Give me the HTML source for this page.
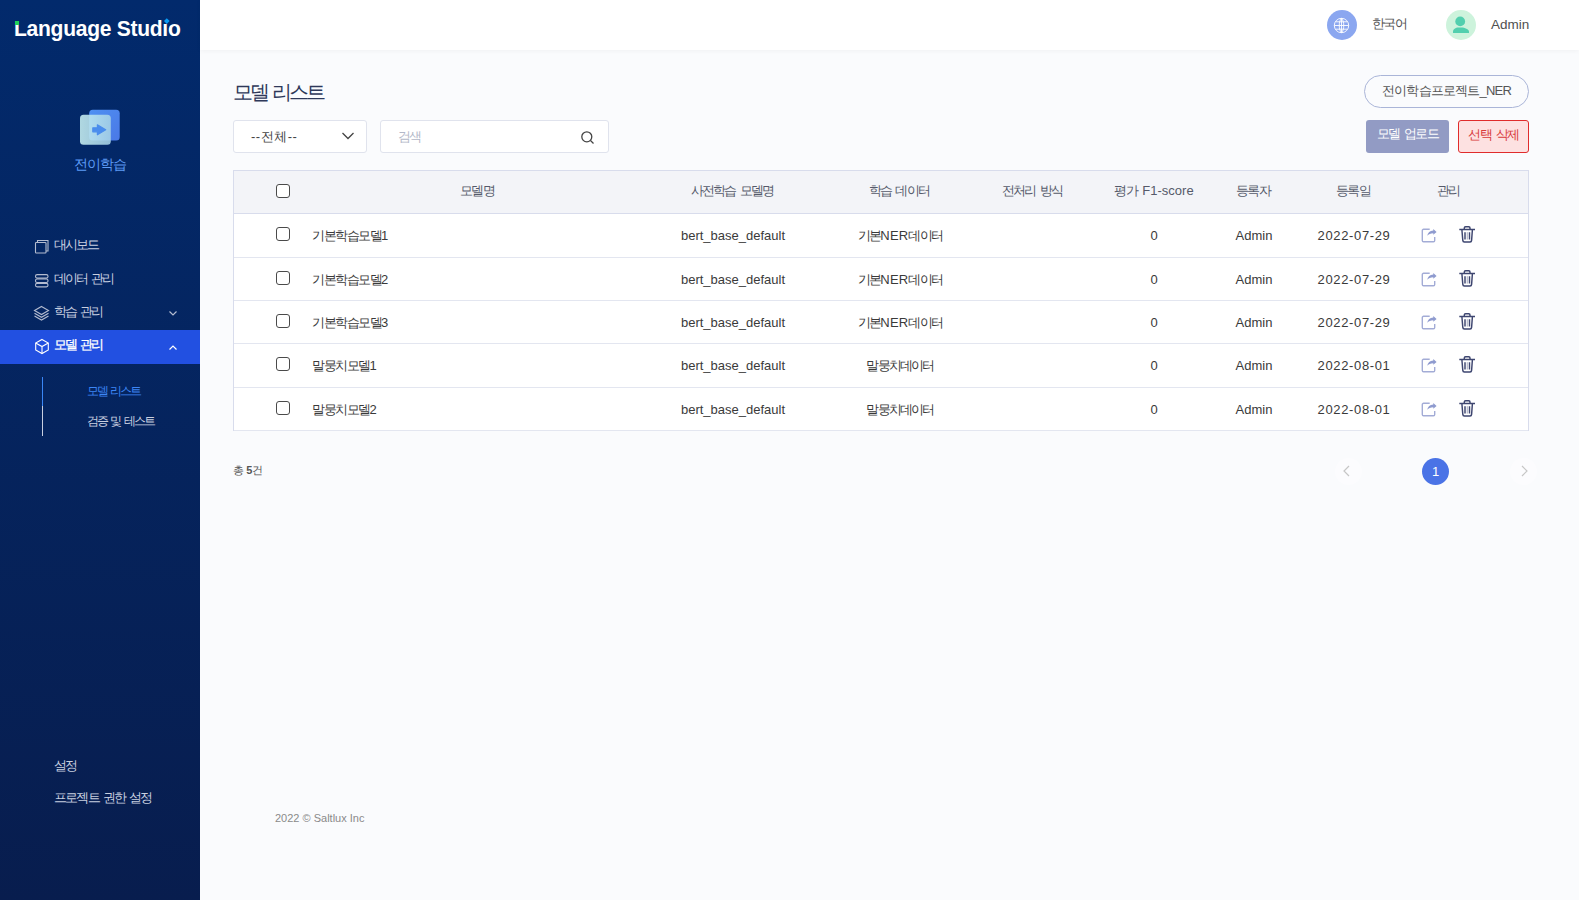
<!DOCTYPE html>
<html><head><meta charset="utf-8">
<style>
*{box-sizing:border-box;margin:0;padding:0}
html,body{width:1579px;height:900px;overflow:hidden;font-family:"Liberation Sans",sans-serif;background:#fafbfd;color:#333}
.abs{position:absolute;white-space:nowrap}
#side{position:absolute;left:0;top:0;width:200px;height:900px;background:linear-gradient(#022a6c,#081d4e)}
#logo{position:absolute;left:14px;top:17px;color:#fff;font-size:21.5px;font-weight:bold;letter-spacing:-0.3px;transform-origin:0 0;transform:scaleX(0.98)}
#hdr{position:absolute;left:200px;top:0;width:1379px;height:50px;background:#fff;box-shadow:0 1px 5px rgba(0,0,0,.045)}
.menu{position:absolute;left:0;width:200px;height:33px;color:#c9d0e0;font-size:13px}
.menu span{position:absolute;left:54px;top:9px}
.menu svg{position:absolute;left:33px;top:9px}
.chev{position:absolute;left:168px;top:12px}
.t13{font-size:13px;color:#444}
#tbl{position:absolute;left:233px;top:170px;width:1296px;height:261px;border:1px solid #d8dcec;background:#fff}
#thead{position:absolute;left:0;top:0;width:1294px;height:43px;background:#f3f4f8;border-bottom:1px solid #d8dcec}
.row{position:absolute;left:0;width:1294px;height:43.4px;border-bottom:1px solid #e3e6f0}
.cb{position:absolute;left:42px;width:14px;height:14px;border:1.6px solid #4a4a4a;border-radius:3px;background:#fff}
.c{position:absolute;top:0;height:43px;line-height:43px;text-align:center;font-size:13px;color:#3a3a3a;white-space:nowrap;transform:translateX(-50%)}
.th{color:#555a6a;line-height:40px}
.kh{letter-spacing:-1.8px;word-spacing:2px;margin-left:-1px}
.kk{letter-spacing:-1.8px}
.ic{position:absolute;top:14px}
.k{letter-spacing:-2px;word-spacing:2px}
.mt{font-size:13px;color:#c9d0e0}
</style></head><body>
<div id="side">
  <div id="logo">Language Stud&#305;o</div>
  <div class="abs" style="left:15px;top:21px;width:4px;height:4px;background:#1ed05a"></div>
  <div class="abs" style="left:164.5px;top:18.9px;width:3.6px;height:3.6px;background:#0a9cf5;transform:rotate(45deg)"></div>
  <!-- app icon -->
  <svg class="abs" style="left:78px;top:107px" width="44" height="40" viewBox="0 0 44 40">
    <defs><linearGradient id="bg1" x1="0" y1="0" x2="1" y2="1"><stop offset="0" stop-color="#4f90f2"/><stop offset="1" stop-color="#4a78e6"/></linearGradient>
    <linearGradient id="fg1" x1="0" y1="0" x2="1" y2="0"><stop offset="0" stop-color="#c8f0f2"/><stop offset="1" stop-color="#a6d2e6"/></linearGradient></defs>
    <rect x="11.2" y="2.7" width="30.5" height="30.8" rx="3.5" fill="url(#bg1)"/>
    <rect x="2" y="7.7" width="30.8" height="30" rx="3.5" fill="url(#fg1)" fill-opacity="0.88"/>
    <path d="M14.8 20.8h4.6v-3l8.3 5-8.3 5v-3h-4.6z" fill="#4b8ded" stroke="#4b8ded" stroke-width="1.2" stroke-linejoin="round"/>
  </svg>
  <div class="abs" style="left:74px;top:156px;color:#5d9bf6;font-size:13.5px;letter-spacing:-1.1px">전이학습</div>
  <svg class="abs" style="left:34px;top:239px" width="16" height="16" viewBox="0 0 16 16" fill="none" stroke="#b4bcd0" stroke-width="1.1"><rect x="1.5" y="3.5" width="10.5" height="10.5" rx="0.8"/><path d="M3.5 3.5V1.5h10.5v10.5h-2"/></svg>
  <div class="abs k mt" style="left:54px;top:236px">대시보드</div>
  <svg class="abs" style="left:34px;top:273px" width="16" height="16" viewBox="0 0 16 16" fill="none" stroke="#b4bcd0" stroke-width="1.1"><rect x="1.5" y="1.6" width="12.5" height="3.5" rx="1.6"/><rect x="1.5" y="6" width="12.5" height="3.5" rx="1.6"/><rect x="1.5" y="10.4" width="12.5" height="3.5" rx="1.6"/></svg>
  <div class="abs k mt" style="left:54px;top:270px">데이터 관리</div>
  <svg class="abs" style="left:33px;top:305px" width="17" height="17" viewBox="0 0 17 17" fill="none" stroke="#b4bcd0" stroke-width="1.1"><path d="M8.5 1.5L15.5 5.5 8.5 9.5 1.5 5.5z"/><path d="M1.5 8.3l7 4 7-4"/><path d="M1.5 11l7 4 7-4"/></svg>
  <div class="abs k mt" style="left:54px;top:303px">학습 관리</div>
  <svg class="abs" style="left:168px;top:310px" width="10" height="7" viewBox="0 0 10 7" fill="none" stroke="#b4bcd0" stroke-width="1.2"><path d="M1.5 1.5l3.5 3.5 3.5-3.5"/></svg>
  <div class="abs" style="left:0;top:330px;width:200px;height:33.5px;background:#2250e1"></div>
  <svg class="abs" style="left:34px;top:338px" width="16" height="17" viewBox="0 0 16 17" fill="none" stroke="#ffffff" stroke-width="1.1"><path d="M8 1.5L14.3 5V12L8 15.5 1.7 12V5z"/><path d="M1.7 5L8 8.5 14.3 5M8 8.5v7"/></svg>
  <div class="abs k mt" style="left:54px;top:336px;color:#fff;-webkit-text-stroke:0.3px #fff">모델 관리</div>
  <svg class="abs" style="left:168px;top:344px" width="10" height="7" viewBox="0 0 10 7" fill="none" stroke="#ffffff" stroke-width="1.2"><path d="M1.5 5.5l3.5-3.5 3.5 3.5"/></svg>
  <div class="abs" style="left:42px;top:377px;width:1px;height:29px;background:#3a86f5"></div>
  <div class="abs" style="left:42px;top:406px;width:1px;height:30px;background:#c8cfe0"></div>
  <div class="abs k" style="left:87px;top:383px;color:#3d86f5;font-size:12px">모델 리스트</div>
  <div class="abs k" style="left:87px;top:413px;color:#c9d0e0;font-size:12px">검증 및 테스트</div>
  <div class="abs k mt" style="left:54px;top:757px">설정</div>
  <div class="abs k mt" style="left:54px;top:789px;letter-spacing:-1.8px">프로젝트 권한 설정</div>
</div>
<div id="hdr"></div>
<!-- header right -->
<div class="abs" style="left:1327px;top:10px;width:30px;height:30px;border-radius:50%;background:#8ba7f0"></div>
<svg class="abs" style="left:1333px;top:17px" width="17" height="17" viewBox="0 0 17 17" fill="none" stroke="#fff" stroke-width="0.9"><circle cx="8.5" cy="8.5" r="7.2"/><path d="M8.5 1.3C5.5 4 5.5 13 8.5 15.7M8.5 1.3C11.5 4 11.5 13 8.5 15.7M8.5 1.3V15.7M1.3 8.5H15.7M2.5 4.8H14.5M2.5 12.2H14.5"/></svg>
<div class="abs t13" style="left:1372px;top:14.5px;letter-spacing:-1.7px;color:#505050">한국어</div>
<div class="abs" style="left:1446px;top:10px;width:30px;height:30px;border-radius:50%;background:#cdf3dc"></div>
<svg class="abs" style="left:1450px;top:14px" width="20" height="20" viewBox="0 0 20 20" fill="#52cfae"><circle cx="10.2" cy="7.4" r="4.9"/><path d="M3 19V17.8C3 15.5 5.5 13.6 8.5 13.6H11.5C14.5 13.6 19 15.5 19 17.8V19Z"/></svg>
<div class="abs" style="left:1491px;top:16.5px;font-size:13.5px;color:#505050">Admin</div>

<div class="abs" style="left:233px;top:78.5px;font-size:19.5px;color:#2e3859;letter-spacing:-2.9px;word-spacing:2.5px">모델 리스트</div>
<div class="abs" style="left:1364px;top:75px;width:165px;height:33px;border:1px solid #aab5d8;border-radius:17px;font-size:13px;color:#555;text-align:center;line-height:30px;letter-spacing:-0.8px">전이학습프로젝트_NER</div>

<div class="abs" style="left:233px;top:120px;width:134px;height:33px;border:1px solid #e0e3ed;border-radius:3px;background:#fff"></div>
<div class="abs" style="left:251px;top:128px;font-size:13px;color:#444;letter-spacing:0.5px">--전체--</div>
<svg class="abs" style="left:341px;top:131px" width="14" height="10" viewBox="0 0 14 10" fill="none" stroke="#444" stroke-width="1.3"><path d="M1.5 2l5.5 5.5L12.5 2"/></svg>
<div class="abs" style="left:380px;top:120px;width:229px;height:33px;border:1px solid #e0e3ed;border-radius:3px;background:#fff"></div>
<div class="abs" style="left:398px;top:128px;font-size:13px;color:#b3b8c8;letter-spacing:-2px">검색</div>
<svg class="abs" style="left:580px;top:130px" width="15" height="15" viewBox="0 0 15 15" fill="none" stroke="#444" stroke-width="1.3"><circle cx="6.8" cy="6.8" r="5"/><path d="M10.5 10.5l3 3"/></svg>

<div class="abs" style="left:1366px;top:120px;width:83px;height:33px;border-radius:3px;background:#929bc4;color:#fff;font-size:13px;text-align:center;line-height:28.5px;letter-spacing:-1.5px;word-spacing:2px">모델 업로드</div>
<div class="abs" style="left:1458px;top:120px;width:71px;height:33px;border-radius:3px;border:1px solid #e02c2c;background:#fde1e1;color:#d83a3a;font-size:13px;text-align:center;line-height:28.5px;letter-spacing:-1.5px;word-spacing:2px">선택 삭제</div>

<div id="tbl">
  <div id="thead">
    <div class="cb" style="top:13px"></div>
    <div class="c th kh" style="left:244px">모델명</div>
    <div class="c th kh" style="left:499px">사전학습 모델명</div>
    <div class="c th kh" style="left:666px">학습 데이터</div>
    <div class="c th kh" style="left:799px">전처리 방식</div>
    <div class="c th" style="left:920px"><span style="letter-spacing:-1.6px">평</span>가 F1-score</div>
    <div class="c th kh" style="left:1020px">등록자</div>
    <div class="c th kh" style="left:1120px">등록일</div>
    <div class="c th kh" style="left:1215px">관리</div>
  </div>
  <div class="row" style="top:43px;height:44px">
    <div class="cb" style="top:13px"></div>
    <div class="c" style="left:78px;transform:none;letter-spacing:-1.5px">기본학습모델1</div>
    <div class="c" style="left:499px">bert_base_default</div>
    <div class="c" style="left:666px;letter-spacing:0.2px"><span class="kk">기본</span>NER<span class="kk">데이터</span></div>
    <div class="c" style="left:920px">0</div>
    <div class="c" style="left:1020px">Admin</div>
    <div class="c" style="left:1120px;letter-spacing:0.65px">2022-07-29</div>
    <svg class="ic" style="left:1187px;top:14px" width="18" height="16" viewBox="0 0 18 16"><path d="M8.7 1.3H2.5A1.2 1.2 0 0 0 1.3 2.5V12.5A1.2 1.2 0 0 0 2.5 13.7H12.5A1.2 1.2 0 0 0 13.7 12.5V9" fill="none" stroke="#a3acd6" stroke-width="1.4"/><path d="M12.3 1L15.6 3.9 12.3 6.8V5.2C9.5 5.2 7.6 6 6.2 7.8 6.8 4.8 8.8 2.8 12.3 2.6Z" fill="#8f9bcf"/></svg>
    <svg class="ic" style="left:1224px;top:10px" width="20" height="20" viewBox="0 0 20 20" fill="none" stroke="#3e4670" stroke-width="1.45"><path d="M1.3 5.5H17M6.3 5.5V4A1.2 1.2 0 0 1 7.5 2.8H10.8A1.2 1.2 0 0 1 12 4V5.5M3.9 5.8L4.8 16.4A1.6 1.6 0 0 0 6.4 17.9H12A1.6 1.6 0 0 0 13.6 16.4L14.4 5.8"/><path d="M7 8.2V15.6M11.5 8.2V15.6"/><path d="M9.25 8.2V15.6" stroke-width="0.8" stroke="#9096b0"/></svg>
  </div>
  <div class="row" style="top:87px;height:43px">
    <div class="cb" style="top:13px"></div>
    <div class="c" style="left:78px;transform:none;letter-spacing:-1.5px">기본학습모델2</div>
    <div class="c" style="left:499px">bert_base_default</div>
    <div class="c" style="left:666px;letter-spacing:0.2px"><span class="kk">기본</span>NER<span class="kk">데이터</span></div>
    <div class="c" style="left:920px">0</div>
    <div class="c" style="left:1020px">Admin</div>
    <div class="c" style="left:1120px;letter-spacing:0.65px">2022-07-29</div>
    <svg class="ic" style="left:1187px;top:14px" width="18" height="16" viewBox="0 0 18 16"><path d="M8.7 1.3H2.5A1.2 1.2 0 0 0 1.3 2.5V12.5A1.2 1.2 0 0 0 2.5 13.7H12.5A1.2 1.2 0 0 0 13.7 12.5V9" fill="none" stroke="#a3acd6" stroke-width="1.4"/><path d="M12.3 1L15.6 3.9 12.3 6.8V5.2C9.5 5.2 7.6 6 6.2 7.8 6.8 4.8 8.8 2.8 12.3 2.6Z" fill="#8f9bcf"/></svg>
    <svg class="ic" style="left:1224px;top:10px" width="20" height="20" viewBox="0 0 20 20" fill="none" stroke="#3e4670" stroke-width="1.45"><path d="M1.3 5.5H17M6.3 5.5V4A1.2 1.2 0 0 1 7.5 2.8H10.8A1.2 1.2 0 0 1 12 4V5.5M3.9 5.8L4.8 16.4A1.6 1.6 0 0 0 6.4 17.9H12A1.6 1.6 0 0 0 13.6 16.4L14.4 5.8"/><path d="M7 8.2V15.6M11.5 8.2V15.6"/><path d="M9.25 8.2V15.6" stroke-width="0.8" stroke="#9096b0"/></svg>
  </div>
  <div class="row" style="top:130px;height:43px">
    <div class="cb" style="top:13px"></div>
    <div class="c" style="left:78px;transform:none;letter-spacing:-1.5px">기본학습모델3</div>
    <div class="c" style="left:499px">bert_base_default</div>
    <div class="c" style="left:666px;letter-spacing:0.2px"><span class="kk">기본</span>NER<span class="kk">데이터</span></div>
    <div class="c" style="left:920px">0</div>
    <div class="c" style="left:1020px">Admin</div>
    <div class="c" style="left:1120px;letter-spacing:0.65px">2022-07-29</div>
    <svg class="ic" style="left:1187px;top:14px" width="18" height="16" viewBox="0 0 18 16"><path d="M8.7 1.3H2.5A1.2 1.2 0 0 0 1.3 2.5V12.5A1.2 1.2 0 0 0 2.5 13.7H12.5A1.2 1.2 0 0 0 13.7 12.5V9" fill="none" stroke="#a3acd6" stroke-width="1.4"/><path d="M12.3 1L15.6 3.9 12.3 6.8V5.2C9.5 5.2 7.6 6 6.2 7.8 6.8 4.8 8.8 2.8 12.3 2.6Z" fill="#8f9bcf"/></svg>
    <svg class="ic" style="left:1224px;top:10px" width="20" height="20" viewBox="0 0 20 20" fill="none" stroke="#3e4670" stroke-width="1.45"><path d="M1.3 5.5H17M6.3 5.5V4A1.2 1.2 0 0 1 7.5 2.8H10.8A1.2 1.2 0 0 1 12 4V5.5M3.9 5.8L4.8 16.4A1.6 1.6 0 0 0 6.4 17.9H12A1.6 1.6 0 0 0 13.6 16.4L14.4 5.8"/><path d="M7 8.2V15.6M11.5 8.2V15.6"/><path d="M9.25 8.2V15.6" stroke-width="0.8" stroke="#9096b0"/></svg>
  </div>
  <div class="row" style="top:173px;height:44px">
    <div class="cb" style="top:13px"></div>
    <div class="c" style="left:78px;transform:none;letter-spacing:-1.5px">말뭉치모델1</div>
    <div class="c" style="left:499px">bert_base_default</div>
    <div class="c" style="left:666px;letter-spacing:-1.8px">말뭉치데이터</div>
    <div class="c" style="left:920px">0</div>
    <div class="c" style="left:1020px">Admin</div>
    <div class="c" style="left:1120px;letter-spacing:0.65px">2022-08-01</div>
    <svg class="ic" style="left:1187px;top:14px" width="18" height="16" viewBox="0 0 18 16"><path d="M8.7 1.3H2.5A1.2 1.2 0 0 0 1.3 2.5V12.5A1.2 1.2 0 0 0 2.5 13.7H12.5A1.2 1.2 0 0 0 13.7 12.5V9" fill="none" stroke="#a3acd6" stroke-width="1.4"/><path d="M12.3 1L15.6 3.9 12.3 6.8V5.2C9.5 5.2 7.6 6 6.2 7.8 6.8 4.8 8.8 2.8 12.3 2.6Z" fill="#8f9bcf"/></svg>
    <svg class="ic" style="left:1224px;top:10px" width="20" height="20" viewBox="0 0 20 20" fill="none" stroke="#3e4670" stroke-width="1.45"><path d="M1.3 5.5H17M6.3 5.5V4A1.2 1.2 0 0 1 7.5 2.8H10.8A1.2 1.2 0 0 1 12 4V5.5M3.9 5.8L4.8 16.4A1.6 1.6 0 0 0 6.4 17.9H12A1.6 1.6 0 0 0 13.6 16.4L14.4 5.8"/><path d="M7 8.2V15.6M11.5 8.2V15.6"/><path d="M9.25 8.2V15.6" stroke-width="0.8" stroke="#9096b0"/></svg>
  </div>
  <div class="row" style="top:217px;height:43px">
    <div class="cb" style="top:13px"></div>
    <div class="c" style="left:78px;transform:none;letter-spacing:-1.5px">말뭉치모델2</div>
    <div class="c" style="left:499px">bert_base_default</div>
    <div class="c" style="left:666px;letter-spacing:-1.8px">말뭉치데이터</div>
    <div class="c" style="left:920px">0</div>
    <div class="c" style="left:1020px">Admin</div>
    <div class="c" style="left:1120px;letter-spacing:0.65px">2022-08-01</div>
    <svg class="ic" style="left:1187px;top:14px" width="18" height="16" viewBox="0 0 18 16"><path d="M8.7 1.3H2.5A1.2 1.2 0 0 0 1.3 2.5V12.5A1.2 1.2 0 0 0 2.5 13.7H12.5A1.2 1.2 0 0 0 13.7 12.5V9" fill="none" stroke="#a3acd6" stroke-width="1.4"/><path d="M12.3 1L15.6 3.9 12.3 6.8V5.2C9.5 5.2 7.6 6 6.2 7.8 6.8 4.8 8.8 2.8 12.3 2.6Z" fill="#8f9bcf"/></svg>
    <svg class="ic" style="left:1224px;top:10px" width="20" height="20" viewBox="0 0 20 20" fill="none" stroke="#3e4670" stroke-width="1.45"><path d="M1.3 5.5H17M6.3 5.5V4A1.2 1.2 0 0 1 7.5 2.8H10.8A1.2 1.2 0 0 1 12 4V5.5M3.9 5.8L4.8 16.4A1.6 1.6 0 0 0 6.4 17.9H12A1.6 1.6 0 0 0 13.6 16.4L14.4 5.8"/><path d="M7 8.2V15.6M11.5 8.2V15.6"/><path d="M9.25 8.2V15.6" stroke-width="0.8" stroke="#9096b0"/></svg>
  </div>
</div>

<div class="abs" style="left:233px;top:462.5px;font-size:11px;color:#555;letter-spacing:-0.4px">총 <b style="font-weight:bold;letter-spacing:0">5</b>건</div>
<div class="abs" style="left:1335px;top:457.5px;width:27px;height:27px;border-radius:50%;background:#fcfcfe"></div>
<div class="abs" style="left:1510px;top:457.5px;width:27px;height:27px;border-radius:50%;background:#fcfcfe"></div>
<div class="abs" style="left:1422px;top:457.5px;width:27px;height:27px;border-radius:50%;background:#4a73e6;color:#fff;font-size:13px;text-align:center;line-height:27px">1</div>
<svg class="abs" style="left:1342px;top:465px" width="10" height="12" viewBox="0 0 10 12" fill="none" stroke="#c6c6c6" stroke-width="1.2"><path d="M7 1L2 6l5 5"/></svg>
<svg class="abs" style="left:1519px;top:465px" width="10" height="12" viewBox="0 0 10 12" fill="none" stroke="#c6c6c6" stroke-width="1.2"><path d="M3 1l5 5-5 5"/></svg>

<div class="abs" style="left:275px;top:812px;font-size:11px;color:#8a8a8a">2022 © Saltlux Inc</div>
</body></html>
